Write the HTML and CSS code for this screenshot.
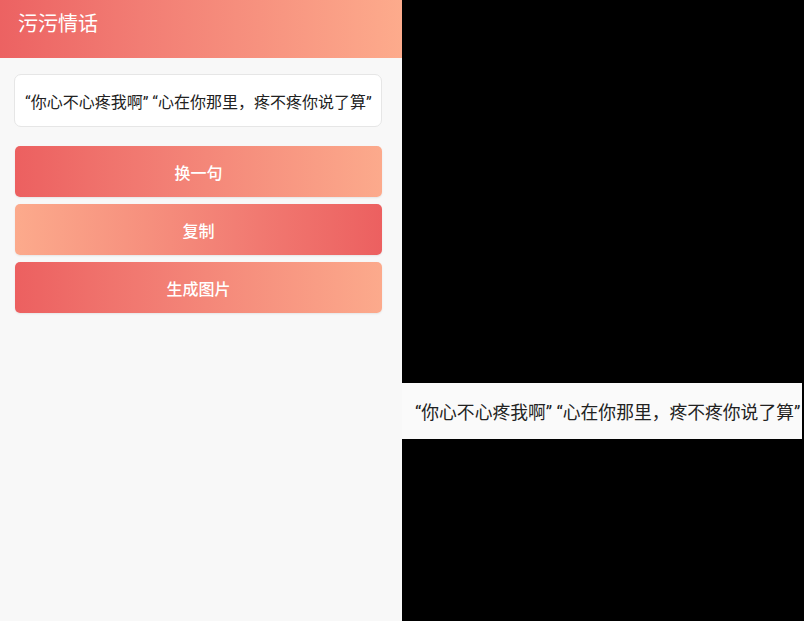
FILE: index.html
```html
<!DOCTYPE html>
<html lang="zh">
<head>
<meta charset="utf-8">
<title>污污情话</title>
<link rel="stylesheet" href="styles.css">
</head>
<body>
<div class="screen">
  <div class="app">
    <header class="appbar">污污情话</header>
    <main class="content">
      <div class="card">“你心不心疼我啊” “心在你那里，疼不疼你说了算”</div>
      <div class="buttons">
        <button class="btn btn-fwd">换一句</button>
        <button class="btn btn-rev">复制</button>
        <button class="btn btn-fwd">生成图片</button>
      </div>
    </main>
  </div>
  <div class="preview">
    <div class="strip">“你心不心疼我啊” “心在你那里，疼不疼你说了算”</div>
  </div>
</div>
</body>
</html>
```
FILE: styles.css
```css
* { box-sizing: border-box; }
html, body { margin: 0; padding: 0; }
body {
  width: 804px;
  height: 621px;
  overflow: hidden;
  font-family: Roboto, "Noto Sans CJK SC", sans-serif;
  background: #000;
}
.screen {
  display: flex;
  height: 621px;
}
.app {
  width: 402px;
  height: 621px;
  background: #f8f8f8;
  display: flex;
  flex-direction: column;
}
.appbar {
  height: 58px;
  padding: 0 18px;
  display: flex;
  align-items: center;
  padding-bottom: 13px;
  color: #fff;
  font-size: 20px;
  background: linear-gradient(90deg, #ec6262 0%, #f27d74 35%, #fdab8c 100%);
}
.content {
  padding: 16px 20px 0 14px;
}
.card {
  height: 53px;
  background: #fff;
  border: 1px solid #e6e6e6;
  border-radius: 7px;
  display: flex;
  align-items: center;
  padding-left: 10px;
  font-size: 16px;
  color: #222;
  white-space: nowrap;
}
.buttons {
  margin-top: 19px;
  padding-left: 1px;
  display: flex;
  flex-direction: column;
  gap: 7px;
}
.btn {
  height: 51px;
  width: 367px;
  border: none;
  border-radius: 5px;
  color: #fff;
  font-family: Roboto, "Noto Sans CJK SC", sans-serif;
  font-size: 16px;
  font-weight: 500;
  padding: 0;
  box-shadow: 0 1px 2px rgba(0,0,0,0.08);
}
.btn-fwd {
  background: linear-gradient(90deg, #ec6060 0%, #f27e74 40%, #fcaa8c 100%);
}
.btn-rev {
  background: linear-gradient(90deg, #fcaa8c 0%, #f27e74 60%, #ec6060 100%);
}
.preview {
  width: 402px;
  height: 621px;
  background: #000;
  padding-top: 383px;
}
.strip {
  width: 400px;
  height: 56px;
  background: #fafafa;
  display: flex;
  align-items: center;
  padding-left: 13px;
  font-size: 17.8px;
  color: #222;
  white-space: nowrap;
  overflow: hidden;
}
```
